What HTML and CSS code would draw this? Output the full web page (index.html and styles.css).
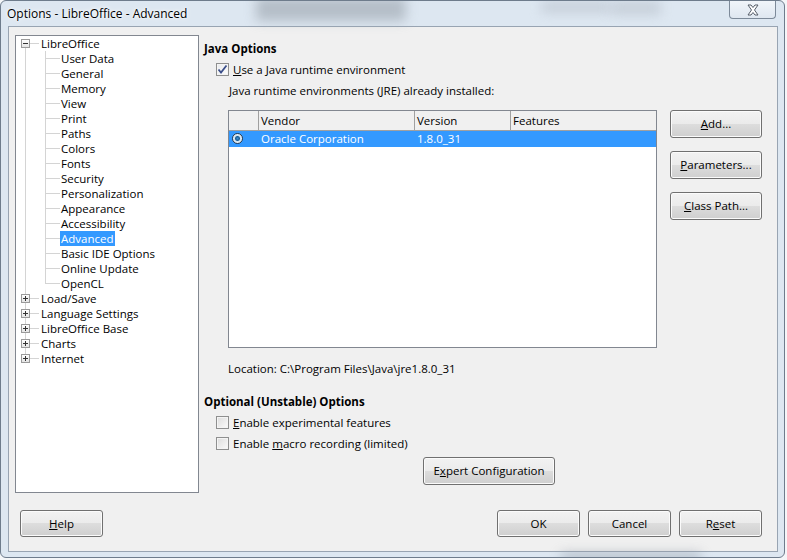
FILE: index.html
```html
<!DOCTYPE html>
<html>
	<head>
		<meta charset="UTF-8">
		<title>Options - LibreOffice - Advanced</title>
		<link rel="stylesheet" href="styles.css">
	</head>
	<body>
		<div class="window">
			<div class="blob b1"></div>
			<div class="blob b2"></div>
			<div class="blob b3"></div>
			<div class="blob b4"></div>
			<div class="titlebar">
				<span class="title">Options - LibreOffice - Advanced</span>
				<div class="close">
					<svg width="14" height="12" viewBox="0 0 14 12">
						<path d="M2 1 L5 1 L7 3.5 L9 1 L12 1 L8.5 6 L12 11 L9 11 L7 8.5 L5 11 L2 11 L5.5 6 Z" fill="#fff" stroke="#555d68" stroke-width="1"/>
					</svg>
				</div>
			</div>

			<div class="client">
				<div class="main">
					<div class="tree">
						<div class="root-line"></div>
						<div class="node top">
							<span class="exp minus"></span>LibreOffice
						</div>
						<div class="children">
							<div class="node">User Data</div>
							<div class="node">General</div>
							<div class="node">Memory</div>
							<div class="node">View</div>
							<div class="node">Print</div>
							<div class="node">Paths</div>
							<div class="node">Colors</div>
							<div class="node">Fonts</div>
							<div class="node">Security</div>
							<div class="node">Personalization</div>
							<div class="node">Appearance</div>
							<div class="node">Accessibility</div>
							<div class="node"><span class="sel">Advanced</span></div>
							<div class="node">Basic IDE Options</div>
							<div class="node">Online Update</div>
							<div class="node">OpenCL</div>
						</div>
						<div class="node top"><span class="exp plus"></span>Load/Save</div>
						<div class="node top"><span class="exp plus"></span>Language Settings</div>
						<div class="node top"><span class="exp plus"></span>LibreOffice Base</div>
						<div class="node top"><span class="exp plus"></span>Charts</div>
						<div class="node top"><span class="exp plus"></span>Internet</div>
					</div>

					<div class="panel">
						<div class="heading">Java Options</div>
						<div class="check-row">
							<span class="check checked">
								<svg width="11" height="11" viewBox="0 0 11 11"><path d="M1.5 5.5 L4 8.5 L9.5 1.5" fill="none" stroke="#3c4f8a" stroke-width="1.8"/></svg>
							</span>
							<span><u>U</u>se a Java runtime environment</span>
						</div>
						<div class="jre-label"><u>J</u>ava runtime environments (JRE) already installed:</div>

						<div class="jre-area">
							<div class="list">
								<div class="list-head">
									<div class="col c0"></div>
									<div class="col c1">Vendor</div>
									<div class="col c2">Version</div>
									<div class="col c3">Features</div>
								</div>
								<div class="list-row selected">
									<div class="col c0"><span class="radio"></span></div>
									<div class="col c1">Oracle Corporation</div>
									<div class="col c2">1.8.0_31</div>
									<div class="col c3"></div>
								</div>
							</div>
							<div class="side-buttons">
								<div class="btn side"><u>A</u>dd...</div>
								<div class="btn side"><u>P</u>arameters...</div>
								<div class="btn side"><u>C</u>lass Path...</div>
							</div>
						</div>

						<div class="location">Location: C:\Program Files\Java\jre1.8.0_31</div>

						<div class="heading second">Optional (Unstable) Options</div>
						<div class="check-row">
							<span class="check"></span>
							<span><u>E</u>nable experimental features</span>
						</div>
						<div class="check-row">
							<span class="check"></span>
							<span>Enable <u>m</u>acro recording (limited)</span>
						</div>
						<div class="expert-row">
							<div class="btn expert">E<u>x</u>pert Configuration</div>
						</div>
					</div>
				</div>

				<div class="footer">
					<div class="btn foot"><u>H</u>elp</div>
					<div class="spacer"></div>
					<div class="btn foot">OK</div>
					<div class="btn foot">Cancel</div>
					<div class="btn foot">R<u>e</u>set</div>
				</div>
			</div>
		</div>
	</body>
</html>
```

FILE: styles.css
```css
* {
	margin: 0;
	padding: 0;
	box-sizing: border-box;
}

body {
	background: #f4f6f8;
	font-family: "Open Sans", "Liberation Sans", sans-serif;
	font-size: 11.5px;
	color: #000;
	width: 787px;
	height: 560px;
	overflow: hidden;
}

u {
	text-decoration: underline;
	text-underline-offset: 1px;
}

.window {
	position: relative;
	width: 785px;
	height: 558px;
	background: #dde7f1;
	border: 1px solid #6e7c8c;
	border-radius: 6px;
	overflow: hidden;
}

.blob {
	position: absolute;
	filter: blur(6px);
	background: #b8c0ca;
	opacity: 0.6;
}

.b1 { left: 255px; top: -4px; width: 150px; height: 24px; background: #9aa3ad; }
.b2 { left: 540px; top: 0; width: 70px; height: 12px; }
.b3 { left: 610px; top: 0; width: 50px; height: 14px; }
.b4 { left: 560px; top: 552px; width: 140px; height: 8px; background: #8e98a4; }

.titlebar {
	position: relative;
	height: 25px;
}

.title {
	position: absolute;
	left: 6px;
	top: 4px;
	font-size: 12px;
	color: #000;
	text-shadow: 0 0 6px #fff, 0 0 3px #fff;
}

.close {
	position: absolute;
	right: 8px;
	top: -2px;
	width: 47px;
	height: 20px;
	border: 1px solid #7d8a99;
	border-top: none;
	border-radius: 0 0 4px 4px;
	background: linear-gradient(#f3f7fb, #dfe7f0);
	display: flex;
	align-items: center;
	justify-content: center;
	padding-top: 2px;
}

.client {
	margin-left: 7px;
	width: 770px;
	height: 526px;
	background: #f0f0f0;
	border: 1px solid #98a4b2;
}

.main {
	display: flex;
	padding: 8px 0 0 6px;
	height: 483px;
}

/* tree */
.tree {
	position: relative;
	width: 184px;
	height: 458px;
	background: #fff;
	border: 1px solid #828790;
}

.root-line {
	position: absolute;
	left: 9px;
	top: 11px;
	height: 307px;
	border-left: 1px solid #d4d4d4;
}

.node {
	position: relative;
	height: 15px;
	line-height: 15px;
	white-space: nowrap;
}

.node.top {
	padding-left: 25px;
}

.node.top::before {
	content: '';
	position: absolute;
	left: 14px;
	top: 7px;
	width: 9px;
	border-top: 1px solid #d4d4d4;
}

.exp {
	position: absolute;
	left: 5px;
	top: 3px;
	width: 9px;
	height: 9px;
	border: 1px solid #9a9a9a;
	background: linear-gradient(#fff, #e4e4e4);
	z-index: 1;
}

.exp::before {
	content: '';
	position: absolute;
	left: 1px;
	top: 3px;
	width: 5px;
	height: 1px;
	background: #333;
}

.exp.plus::after {
	content: '';
	position: absolute;
	left: 3px;
	top: 1px;
	width: 1px;
	height: 5px;
	background: #333;
}

.children {
	position: relative;
	padding-left: 45px;
}

.children::before {
	content: '';
	position: absolute;
	left: 29px;
	top: 0;
	bottom: 7px;
	border-left: 1px solid #d4d4d4;
}

.children .node::before {
	content: '';
	position: absolute;
	left: -15px;
	top: 7px;
	width: 14px;
	border-top: 1px solid #d4d4d4;
}

.sel {
	background: #3399ff;
	color: #fff;
	padding: 0 1px;
	margin-left: -1px;
}

/* right panel */
.panel {
	flex: 1;
	padding-left: 5px;
	padding-top: 6px;
}

.heading {
	font-weight: bold;
	height: 15px;
	line-height: 15px;
}

.heading.second {
	margin-top: 18px;
}

.check-row {
	display: flex;
	align-items: center;
	height: 15px;
	line-height: 15px;
	margin-top: 6px;
	padding-left: 12px;
}

.check {
	width: 13px;
	height: 13px;
	border: 1px solid #8e8f8f;
	background: linear-gradient(135deg, #dcdcdc, #fbfbfb);
	margin-right: 4px;
	display: flex;
	align-items: center;
	justify-content: center;
	box-shadow: inset 0 0 0 1px #f4f4f4;
}

.check.checked {
	background: linear-gradient(135deg, #e8eaed, #fdfdfd);
}

.jre-label {
	height: 15px;
	line-height: 15px;
	margin-top: 6px;
	padding-left: 25px;
}

.jre-area {
	display: flex;
	margin-top: 12px;
	padding-left: 24px;
}

.list {
	width: 429px;
	height: 238px;
	background: #fff;
	border: 1px solid #828790;
}

.list-head,
.list-row {
	display: flex;
}

.list-head {
	height: 20px;
	line-height: 20px;
	background: #f0f0f0;
	border-bottom: 1px solid #a0a0a0;
}

.list-head .col {
	border-right: 1px solid #a0a0a0;
	padding-left: 2px;
}

.list-row {
	height: 16px;
	line-height: 16px;
}

.list-row.selected {
	background: #3399ff;
	color: #fff;
}

.col.c0 { width: 30px; }
.col.c1 { width: 156px; padding-left: 2px; }
.col.c2 { width: 96px; padding-left: 2px; }
.col.c3 { flex: 1; padding-left: 2px; }

.list-head .col.c3 {
	border-right: none;
}

.radio {
	display: inline-block;
	width: 11px;
	height: 11px;
	margin: 2px 0 0 3px;
	border-radius: 50%;
	border: 1px solid #2b3a4c;
	background: radial-gradient(circle, #3d8fd0 0, #1d5e94 2px, #cfe4f4 3px, #f4f8fb 5px);
}

.side-buttons {
	display: flex;
	flex-direction: column;
	gap: 13px;
	margin-left: 13px;
}

.btn {
	height: 28px;
	line-height: 26px;
	text-align: center;
	border: 1px solid #707070;
	border-radius: 3px;
	background: linear-gradient(#f2f2f2 0, #ebebeb 50%, #dddddd 50%, #cfcfcf 100%);
	box-shadow: inset 0 0 0 1px #fbfbfb;
}

.btn.side {
	width: 92px;
}

.location {
	height: 15px;
	line-height: 15px;
	margin-top: 13px;
	padding-left: 24px;
}

.expert-row {
	padding-left: 219px;
	margin-top: 6px;
}

.btn.expert {
	width: 132px;
}

/* footer */
.footer {
	display: flex;
	gap: 8px;
	padding: 0 15px 0 11px;
}

.spacer {
	flex: 1;
}

.btn.foot {
	width: 83px;
	height: 27px;
	line-height: 25px;
}
```
